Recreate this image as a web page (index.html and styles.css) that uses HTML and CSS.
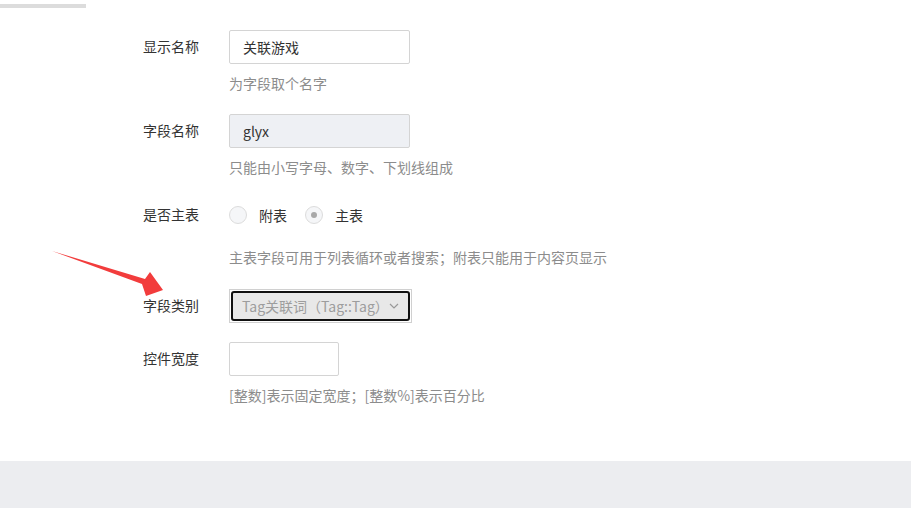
FILE: index.html
```html
<!DOCTYPE html>
<html lang="zh-CN">
   <head>
      <meta charset="UTF-8">
      <meta name="viewport" content="width=device-width, initial-scale=1.0">
      <title>字段设置</title>
      <link rel="stylesheet" href="styles.css">
   </head>
   <body>
      <div class="tab-line"></div>
      <form class="field-form">
         <div class="row">
            <label class="label">显示名称</label>
            <div class="control">
               <input class="input" type="text" value="关联游戏">
            </div>
         </div>
         <p class="help">为字段取个名字</p>

         <div class="row">
            <label class="label">字段名称</label>
            <div class="control">
               <input class="input disabled" type="text" value="glyx" disabled>
            </div>
         </div>
         <p class="help">只能由小写字母、数字、下划线组成</p>

         <div class="row">
            <label class="label">是否主表</label>
            <div class="control radios">
               <span class="radio"></span><span class="radio-text">附表</span>
               <span class="radio checked"></span><span class="radio-text">主表</span>
            </div>
         </div>
         <p class="help help-radio">主表字段可用于列表循环或者搜索；附表只能用于内容页显示</p>

         <div class="row row-select">
            <label class="label">字段类别</label>
            <div class="control">
               <div class="select">
                  <div class="select-inner">
                     <span>Tag关联词（Tag::Tag）</span>
                     <svg width="10" height="6" viewBox="0 0 10 6"><path d="M1 1l4 4 4-4" fill="none" stroke="#999" stroke-width="1.2"/></svg>
                  </div>
               </div>
            </div>
         </div>

         <div class="row">
            <label class="label">控件宽度</label>
            <div class="control">
               <input class="input small" type="text" value="">
            </div>
         </div>
         <p class="help">[整数]表示固定宽度；[整数%]表示百分比</p>
      </form>
      <div class="footer"></div>

      <svg class="arrow" width="911" height="508" viewBox="0 0 911 508">
         <polygon points="52,251 145,279 150,272 163,290 146,296 142,284" fill="#f23c3c"/>
      </svg>
   </body>
</html>
```

FILE: styles.css
```css
body {
margin: 0;
font-family: "Noto Sans CJK SC", "Liberation Sans", sans-serif;
font-size: 14px;
color: #333;
background: #fff;
position: relative;
height: 508px;
overflow: hidden;
}
.tab-line {
width: 86px;
height: 4px;
margin-top: 4px;
background: #dcdcdc;
}
.field-form {
padding: 22px 0 0 143px;
height: 453px;
box-sizing: border-box;
}
.row {
display: flex;
align-items: center;
height: 34px;
}
.label {
width: 86px;
flex: none;
line-height: 20px;
position: relative;
top: -1px;
}
.input {
width: 181px;
height: 34px;
box-sizing: border-box;
border: 1px solid #d4d4d4;
border-radius: 2px;
padding: 0 13px;
font-family: inherit;
font-size: 14px;
color: #333;
background: #fff;
}
.input.disabled {
background: #eef0f4;
color: #333;
}
.input.small {
width: 110px;
}
.help {
margin: 9px 0 21px 86px;
line-height: 20px;
color: #8c8c8c;
}
.help-radio {
margin-top: 15px;
margin-bottom: 22px;
}
.radios {
display: flex;
align-items: center;
}
.radio {
width: 18px;
height: 18px;
box-sizing: border-box;
border: 1px solid #dcdcdc;
border-radius: 50%;
background: #f5f6f8;
display: flex;
align-items: center;
justify-content: center;
}
.radio.checked::after {
content: "";
width: 6px;
height: 6px;
border-radius: 50%;
background: #a8a8a8;
}
.radio-text {
margin: 0 18px 0 12px;
}
.row-select {
margin-bottom: 19px;
}
.select {
width: 183px;
height: 34px;
box-sizing: border-box;
border: 1px solid #d0d0d0;
padding: 1px;
}
.select-inner {
height: 100%;
box-sizing: border-box;
border: 2px solid #111;
border-radius: 3px;
background: #e8e8e8;
color: #9d9d9d;
display: flex;
align-items: center;
justify-content: space-between;
padding: 0 9px 0 9px;
}
.footer {
height: 47px;
background: #ecedf0;
}
.arrow {
position: absolute;
left: 0;
top: 0;
pointer-events: none;
}
```
